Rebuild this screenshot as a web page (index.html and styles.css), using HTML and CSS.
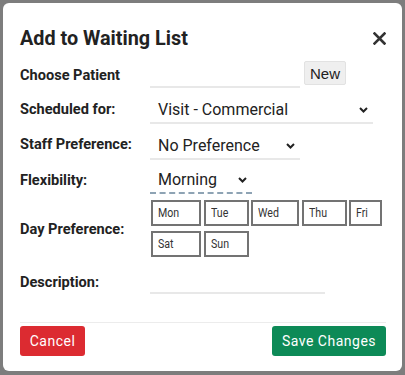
FILE: index.html
```html
<!DOCTYPE html>
<html lang="en">
<head>
    <meta charset="UTF-8">
    <meta name="viewport" content="width=device-width, initial-scale=1.0">
    <title>Add to Waiting List</title>
    <link rel="stylesheet" href="styles.css">
</head>
<body>
    <div class="backdrop">
        <div class="modal">
            <div class="modal-header">
                <h1>Add to Waiting List</h1>
                <button class="close" type="button" aria-label="Close">
                    <svg width="13" height="13" viewBox="0 0 13 13"><path d="M1.5 1.5 L11.5 11.5 M11.5 1.5 L1.5 11.5" stroke="#333" stroke-width="2.6" stroke-linecap="square"/></svg>
                </button>
            </div>

            <form class="modal-body">
                <div class="field row-patient">
                    <label><span>Choose Patient</span></label>
                    <div class="control">
                        <input type="text" class="line-input patient-input">
                        <button type="button" class="btn-new">New</button>
                    </div>
                </div>

                <div class="field row-sched">
                    <label><span>Scheduled for:</span></label>
                    <div class="control">
                        <div class="select select-sched">
                            <span>Visit - Commercial</span>
                            <svg class="chev" width="9" height="6" viewBox="0 0 9 6"><path d="M1 1 L4.5 4.5 L8 1" fill="none" stroke="#222" stroke-width="2"/></svg>
                        </div>
                    </div>
                </div>

                <div class="field row-staff">
                    <label><span>Staff Preference:</span></label>
                    <div class="control">
                        <div class="select select-staff">
                            <span>No Preference</span>
                            <svg class="chev" width="9" height="6" viewBox="0 0 9 6"><path d="M1 1 L4.5 4.5 L8 1" fill="none" stroke="#222" stroke-width="2"/></svg>
                        </div>
                    </div>
                </div>

                <div class="field row-flex">
                    <label><span>Flexibility:</span></label>
                    <div class="control">
                        <div class="select select-flex">
                            <span>Morning</span>
                            <svg class="chev" width="9" height="6" viewBox="0 0 9 6"><path d="M1 1 L4.5 4.5 L8 1" fill="none" stroke="#222" stroke-width="2"/></svg>
                        </div>
                    </div>
                </div>

                <div class="field row-days">
                    <label><span>Day Preference:</span></label>
                    <div class="control">
                        <div class="days">
                            <button type="button" class="day"><span>Mon</span></button>
                            <button type="button" class="day"><span>Tue</span></button>
                            <button type="button" class="day"><span>Wed</span></button>
                            <button type="button" class="day"><span>Thu</span></button>
                            <button type="button" class="day"><span>Fri</span></button>
                            <button type="button" class="day"><span>Sat</span></button>
                            <button type="button" class="day"><span>Sun</span></button>
                        </div>
                    </div>
                </div>

                <div class="field row-desc">
                    <label><span>Description:</span></label>
                    <div class="control">
                        <input type="text" class="line-input desc-input">
                    </div>
                </div>
            </form>

            <div class="modal-footer">
                <button type="button" class="btn btn-cancel">Cancel</button>
                <button type="button" class="btn btn-save">Save Changes</button>
            </div>
        </div>
    </div>
</body>
</html>
```

FILE: styles.css
```css
* { box-sizing: border-box; }
html, body { margin: 0; padding: 0; }
body { font-family: Roboto, "Liberation Sans", sans-serif; color: #222; background: #7d7d7d; width: 405px; height: 375px; overflow: hidden; }

.backdrop { padding: 3px 3px 0 3px; }
.modal { width: 399px; height: 368px; background: #fff; border-radius: 6px; display: flex; flex-direction: column; }

.modal-header { display: flex; align-items: center; justify-content: space-between; padding: 16px 16px 0 17px; height: 55px; }
.modal-header h1 { margin: 0; font-size: 19.8px; font-weight: 700; color: #222; line-height: 24px; }
.close { border: 0; background: none; padding: 0; width: 13px; height: 13px; display: flex; }

.modal-body { padding: 2px 16px 0 17px; display: flex; flex-direction: column; }
.field { display: flex; align-items: center; }
.field label { width: 130px; font-size: 15.5px; font-weight: 700; color: #222; white-space: nowrap; }
/* labels use a condensed face in the original */
.field label span { display: inline-block; transform: scaleX(0.94); transform-origin: left center; }
.control { display: flex; align-items: flex-end; }

.row-patient { height: 30px; }
.row-sched { height: 31px; margin-top: 3px; }
.row-staff { height: 30px; margin-top: 5px; }
.row-flex { height: 29px; margin-top: 6px; }
.row-days { height: 58px; margin-top: 5px; }
.row-days label { padding-top: 2px; }
.row-desc { height: 28px; margin-top: 11px; }

.line-input { border: 0; border-bottom: 2px solid #e8e8e8; height: 26px; outline: none; font: inherit; }
.patient-input { width: 150px; }
.desc-input { width: 175px; }
.row-patient .control { align-self: flex-start; height: 28px; }
.row-desc .control { align-self: flex-start; }

.btn-new { margin-left: 4px; margin-bottom: 3px; width: 42px; height: 24px; padding: 0; font-family: "Liberation Sans", Arial, sans-serif; font-size: 15px; color: #222; background: #efefef; border: 1px solid #e2e2e2; border-radius: 2px; }

.select { display: flex; align-items: center; justify-content: space-between; height: 31px; padding: 4px 5px 0 8px; font-size: 16px; color: #222; border-bottom: 2px solid #e8e8e8; }
.select-sched { width: 223px; }
.select-staff { width: 150px; }
.select-flex { width: 102px; border-bottom: 2px dashed #8ea3b4; height: 29px; padding-top: 2px; }
.chev { display: block; margin-top: 1px; }

.days { display: grid; grid-template-columns: 50px 45px 48px 45px 33px; column-gap: 2.5px; row-gap: 5px; margin-left: 1px; }
.day { height: 26px; padding: 0 0 0 5px; text-align: left; font-family: Roboto, sans-serif; font-size: 12.5px; color: #333; background: #fff; border: 2px solid #737373; border-radius: 0; white-space: nowrap; }
.day span { display: inline-block; transform: scaleX(0.85); transform-origin: left center; }

.modal-footer { margin: auto 16px 15px 17px; border-top: 1px solid #ececec; padding-top: 3px; display: flex; justify-content: space-between; }
.btn { height: 30px; border: 0; border-radius: 3px; color: #fff; font-family: Roboto, sans-serif; font-size: 14px; font-weight: 400; letter-spacing: 0.5px; padding: 0; }
.btn-cancel { background: #dc2b31; width: 65px; }
.btn-save { background: #0d8a57; width: 114px; }
```
